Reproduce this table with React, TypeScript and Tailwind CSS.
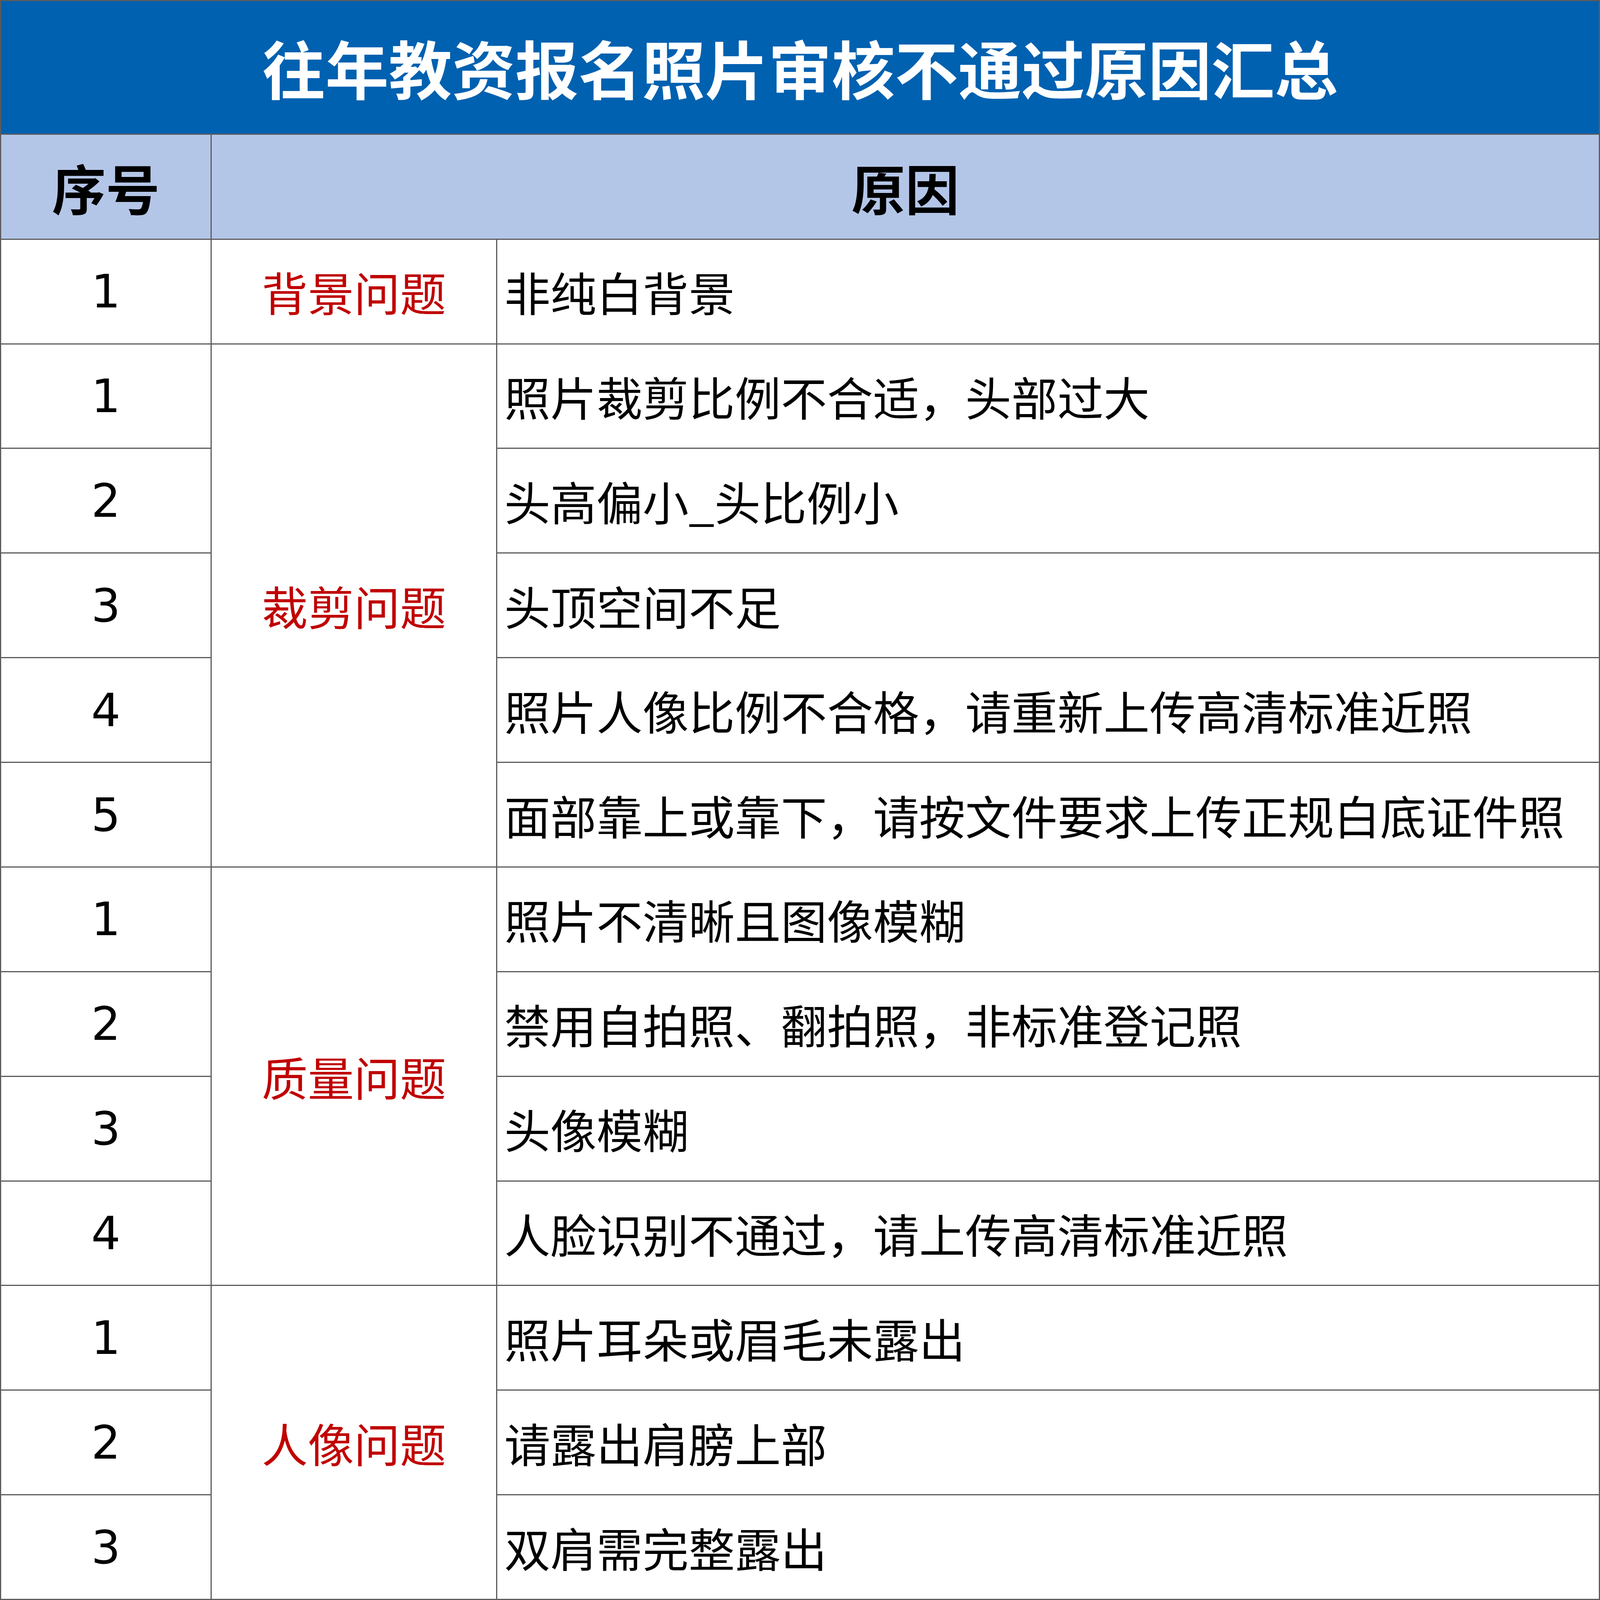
import React from "react";

const groups = [
  { name: "背景问题", span: "row-span-1", items: ["非纯白背景"] },
  {
    name: "裁剪问题",
    span: "row-span-5",
    items: [
      "照片裁剪比例不合适，头部过大",
      "头高偏小_头比例小",
      "头顶空间不足",
      "照片人像比例不合格，请重新上传高清标准近照",
      "面部靠上或靠下，请按文件要求上传正规白底证件照",
    ],
  },
  {
    name: "质量问题",
    span: "row-span-4",
    items: [
      "照片不清晰且图像模糊",
      "禁用自拍照、翻拍照，非标准登记照",
      "头像模糊",
      "人脸识别不通过，请上传高清标准近照",
    ],
  },
  {
    name: "人像问题",
    span: "row-span-3",
    items: ["照片耳朵或眉毛未露出", "请露出肩膀上部", "双肩需完整露出"],
  },
];

const cjk = "font-['Noto_Sans_CJK_SC',sans-serif]";

export default function App() {
  return (
    <div className="h-screen w-full overflow-hidden bg-white">
      <div className="grid h-full w-full grid-cols-[536px_728px_1fr] grid-rows-[366fr_287fr_repeat(13,286fr)] gap-[3px] bg-[#5c5c5c] p-[3px]">
        <div
          className={`col-span-3 flex items-center justify-center bg-[#0061b0] text-[162px] font-bold leading-none text-white ${cjk}`}
        >
          往年教资报名照片审核不通过原因汇总
        </div>
        <div
          className={`flex items-center justify-center bg-[#b4c6e8] text-[138px] font-bold leading-none text-black ${cjk}`}
        >
          序号
        </div>
        <div
          className={`col-span-2 flex items-center justify-center bg-[#b4c6e8] text-[138px] font-bold leading-none text-black ${cjk}`}
        >
          原因
        </div>
        {groups.map((g) =>
          g.items.map((item, i) => (
            <React.Fragment key={g.name + i}>
              <div className="flex items-center justify-center bg-white font-['DejaVu_Sans',sans-serif] text-[118px] leading-none text-black">
                {i + 1}
              </div>
              {i === 0 && (
                <div
                  className={`${g.span} flex items-center justify-center bg-white text-[118px] leading-none text-[#c00000] ${cjk}`}
                >
                  {g.name}
                </div>
              )}
              <div
                className={`flex items-center bg-white pl-[18px] text-[118px] leading-none whitespace-nowrap text-black ${cjk}`}
              >
                {item}
              </div>
            </React.Fragment>
          ))
        )}
      </div>
    </div>
  );
}
